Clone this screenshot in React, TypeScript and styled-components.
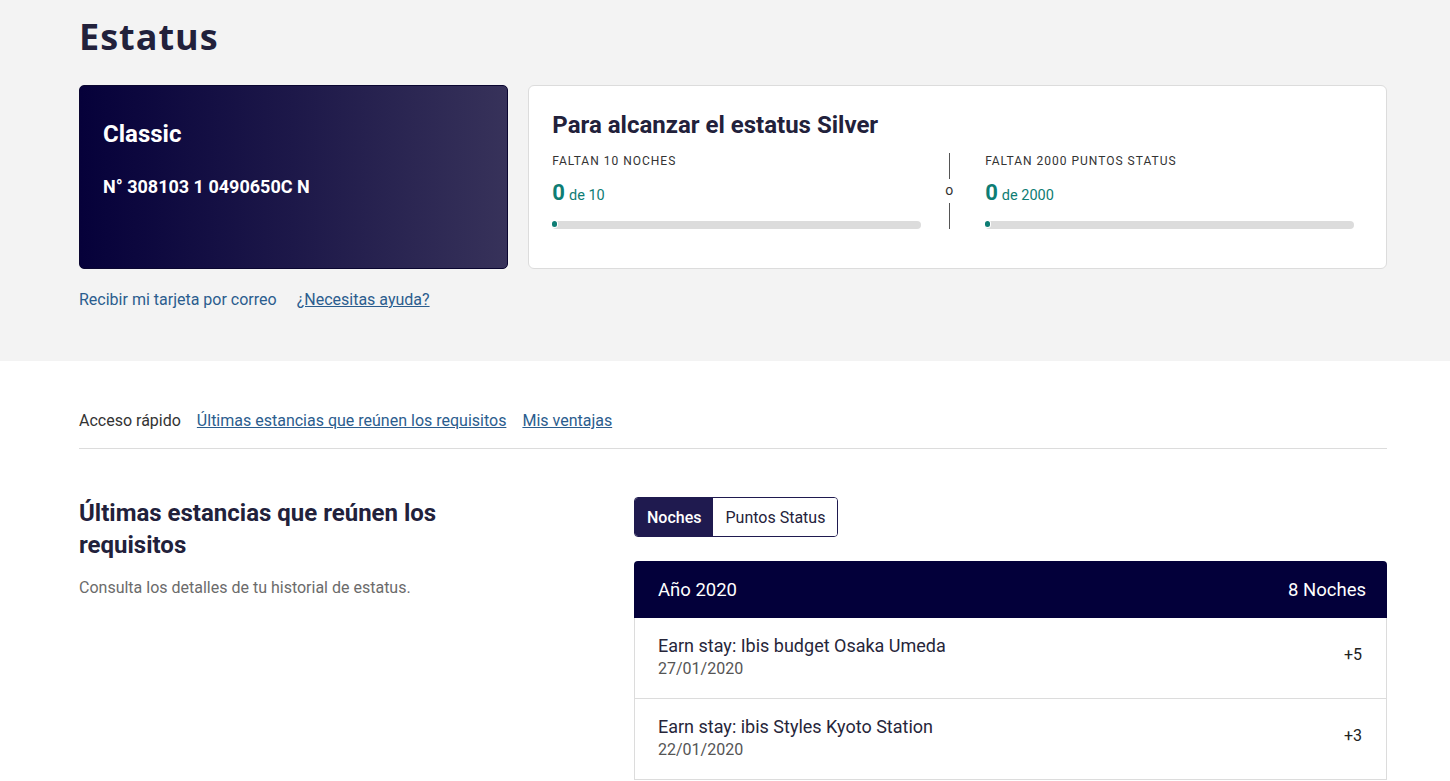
import React from "react";
import styled, { createGlobalStyle } from "styled-components";

const Global = createGlobalStyle`
  html, body { margin: 0; padding: 0; background: #fff; }
  body { font-family: Roboto, "Liberation Sans", Arial, sans-serif; color: #24223b; }
  * { box-sizing: border-box; }
`;

const TopSection = styled.section`
  background: #f3f3f3;
  height: 361px;
  padding-top: 15px;
`;

const Container = styled.div`
  width: 1308px;
  margin-left: 79px;
`;

const PageTitle = styled.h1`
  margin: 0 0 27px;
  font-family: "Open Sans", "Noto Sans", sans-serif;
  font-weight: 700;
  font-size: 36px;
  line-height: 43px;
  letter-spacing: 1px;
  color: #22213b;
`;

const CardsGrid = styled.div`
  display: grid;
  grid-template-columns: 1fr 2fr;
  gap: 20px;
`;

const MemberCard = styled.div`
  height: 184px;
  border-radius: 5px;
  border: 1px solid #0a0630;
  background: linear-gradient(90deg, #06013a 0%, #1d1849 50%, #37325a 100%);
  padding: 34px 23px;
  color: #fff;
`;

const CardTier = styled.div`
  font-size: 24px;
  line-height: 28px;
  font-weight: 700;
  margin-bottom: 27px;
`;

const CardNumber = styled.div`
  font-size: 18px;
  line-height: 24px;
  font-weight: 700;
`;

const GoalCard = styled.div`
  height: 184px;
  background: #fff;
  border: 1px solid #dcdcdc;
  border-radius: 6px;
  padding: 25px 32px 0 23px;
`;

const GoalTitle = styled.h2`
  margin: 0 0 14px;
  font-size: 24px;
  line-height: 28px;
  font-weight: 700;
  color: #22213b;
`;

const GoalGrid = styled.div`
  display: grid;
  grid-template-columns: 1fr 64px 1fr;
`;

const GoalCol = styled.div``;

const GoalLabel = styled.div`
  font-size: 12px;
  line-height: 16px;
  letter-spacing: 1px;
  text-transform: uppercase;
  color: #333;
  font-weight: 400;
  margin-bottom: 10px;
`;

const GoalValue = styled.div`
  color: #0e7d74;
  line-height: 28px;
  height: 28px;
  margin-bottom: 14px;
`;

const BigNum = styled.span`
  font-size: 22px;
  font-weight: 700;
  margin-right: 4px;
`;

const SmallNum = styled.span`
  font-size: 14.5px;
`;

const Bar = styled.div`
  height: 8px;
  border-radius: 4px;
  background: #dcdcdc;
`;

const BarFill = styled.div`
  height: 6px;
  margin-top: 1px;
  border-radius: 3px;
  background: #0e7d74;
  box-shadow: 0 0 0 1px #fff;
`;

const Divider = styled.div`
  display: flex;
  flex-direction: column;
  align-items: center;
  height: 76px;
  padding-right: 8px;
`;

const DivLine = styled.div`
  flex: 1;
  width: 1px;
  background: #555;
`;

const DivText = styled.div`
  font-size: 14px;
  line-height: 14px;
  margin: 4px 0 6px;
  color: #333;
`;

const LinksRow = styled.div`
  display: flex;
  gap: 20px;
  margin-top: 21px;
`;

const Link = styled.a<{ $underline?: boolean }>`
  font-size: 16px;
  line-height: 20px;
  color: #2b5d8e;
  text-decoration: ${(p) => (p.$underline ? "underline" : "none")};
  cursor: pointer;
`;

const QuickBar = styled.div`
  display: flex;
  align-items: center;
  gap: 16px;
  padding: 50px 0 17px;
  border-bottom: 1px solid #dcdcdc;
`;

const QuickLabel = styled.span`
  font-size: 16px;
  line-height: 20px;
  color: #333;
`;

const ContentGrid = styled.div`
  display: grid;
  grid-template-columns: repeat(12, 1fr);
  column-gap: 24px;
  margin-top: 48px;
`;

const Intro = styled.div`
  grid-column: 1 / 5;
`;

const SectionTitle = styled.h2`
  margin: 0 0 17px;
  font-size: 24px;
  line-height: 32px;
  font-weight: 700;
  color: #22213b;
`;

const SectionText = styled.p`
  margin: 0;
  font-size: 16px;
  line-height: 20px;
  color: #6b6b6b;
`;

const Panel = styled.div`
  grid-column: 6 / 13;
`;

const Toggle = styled.div`
  display: inline-flex;
  height: 40px;
  border: 1px solid #1f1a4f;
  border-radius: 4px;
  overflow: hidden;
  margin-bottom: 24px;
`;

const ToggleBtn = styled.button<{ $active?: boolean }>`
  border: 0;
  margin: 0;
  padding: 0 12px;
  font-family: Roboto, sans-serif;
  font-size: 16px;
  font-weight: ${(p) => (p.$active ? 500 : 400)};
  background: ${(p) => (p.$active ? "#1f1a4f" : "#fff")};
  color: ${(p) => (p.$active ? "#fff" : "#24223b")};
  cursor: pointer;
`;

const Table = styled.div`
  border-radius: 4px 4px 0 0;
  overflow: hidden;
`;

const TableHead = styled.div`
  height: 57px;
  background: #03003a;
  color: #fff;
  display: flex;
  align-items: center;
  justify-content: space-between;
  padding: 0 21px 0 24px;
  font-size: 18.5px;
`;

const Row = styled.div`
  display: flex;
  justify-content: space-between;
  height: 81px;
  padding: 16px 24px 0 23px;
  border: 1px solid #dcdcdc;
  border-top: 0;
`;

const RowInfo = styled.div``;

const RowTitle = styled.div`
  font-size: 18px;
  line-height: 24px;
  font-weight: 400;
  color: #27263a;
`;

const RowDate = styled.div`
  margin-top: 1px;
  font-size: 16px;
  line-height: 20px;
  color: #555;
`;

const RowValue = styled.div`
  margin-top: 9px;
  font-size: 16px;
  line-height: 24px;
  color: #222;
`;

const stays = [
  { name: "Earn stay: Ibis budget Osaka Umeda", date: "27/01/2020", value: "+5" },
  { name: "Earn stay: ibis Styles Kyoto Station", date: "22/01/2020", value: "+3" },
];

export default function App() {
  return (
    <>
      <Global />
      <TopSection>
        <Container>
          <PageTitle>Estatus</PageTitle>
          <CardsGrid>
            <MemberCard>
              <CardTier>Classic</CardTier>
              <CardNumber>N° 308103 1 0490650C N</CardNumber>
            </MemberCard>
            <GoalCard>
              <GoalTitle>Para alcanzar el estatus Silver</GoalTitle>
              <GoalGrid>
                <GoalCol>
                  <GoalLabel>Faltan 10 noches</GoalLabel>
                  <GoalValue>
                    <BigNum>0</BigNum>
                    <SmallNum>de 10</SmallNum>
                  </GoalValue>
                  <Bar>
                    <BarFill style={{ width: "5px" }} />
                  </Bar>
                </GoalCol>
                <Divider>
                  <DivLine />
                  <DivText>o</DivText>
                  <DivLine />
                </Divider>
                <GoalCol>
                  <GoalLabel>Faltan 2000 puntos status</GoalLabel>
                  <GoalValue>
                    <BigNum>0</BigNum>
                    <SmallNum>de 2000</SmallNum>
                  </GoalValue>
                  <Bar>
                    <BarFill style={{ width: "5px" }} />
                  </Bar>
                </GoalCol>
              </GoalGrid>
            </GoalCard>
          </CardsGrid>
          <LinksRow>
            <Link>Recibir mi tarjeta por correo</Link>
            <Link $underline>¿Necesitas ayuda?</Link>
          </LinksRow>
        </Container>
      </TopSection>
      <Container>
        <QuickBar>
          <QuickLabel>Acceso rápido</QuickLabel>
          <Link $underline>Últimas estancias que reúnen los requisitos</Link>
          <Link $underline>Mis ventajas</Link>
        </QuickBar>
        <ContentGrid>
          <Intro>
            <SectionTitle>Últimas estancias que reúnen los requisitos</SectionTitle>
            <SectionText>Consulta los detalles de tu historial de estatus.</SectionText>
          </Intro>
          <Panel>
            <Toggle>
              <ToggleBtn $active>Noches</ToggleBtn>
              <ToggleBtn>Puntos Status</ToggleBtn>
            </Toggle>
            <Table>
              <TableHead>
                <span>Año 2020</span>
                <span>8 Noches</span>
              </TableHead>
              {stays.map((s) => (
                <Row key={s.date}>
                  <RowInfo>
                    <RowTitle>{s.name}</RowTitle>
                    <RowDate>{s.date}</RowDate>
                  </RowInfo>
                  <RowValue>{s.value}</RowValue>
                </Row>
              ))}
            </Table>
          </Panel>
        </ContentGrid>
      </Container>
    </>
  );
}
